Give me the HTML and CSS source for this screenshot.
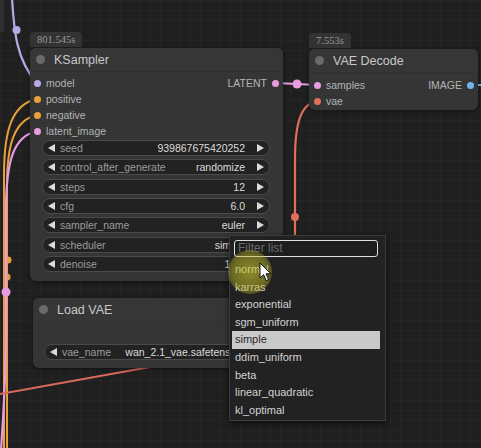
FILE: index.html
```html
<!DOCTYPE html>
<html>
<head>
<meta charset="utf-8">
<link rel="stylesheet" href="styles.css">
</head>
<body>
<div class="canvas">
  <div class="sidepanel"></div>

  <svg class="wires" width="481" height="448" viewBox="0 0 481 448">
    <path d="M12 -2 C14 30, 16 60, 37 83" stroke="#b9a6e6" stroke-width="2.2" fill="none"/>
    <circle cx="16.5" cy="30" r="4" fill="#b9a6e6"/>
    <path d="M37 99 C12 104, 4 130, 4 175 L4 450" stroke="#e8a13a" stroke-width="2" fill="none"/>
    <path d="M37 115 C14 120, 7 145, 7 185 L7 450" stroke="#e8a13a" stroke-width="2" fill="none"/>
    <circle cx="8" cy="260" r="3.5" fill="#e8a13a"/>
    <circle cx="7" cy="277" r="3.5" fill="#e8a13a"/>
    <path d="M37 131 C14 136, 6 160, 6 210 L6 330 C6 380, 3 420, 1 450" stroke="#e89be0" stroke-width="2.2" fill="none"/>
    <circle cx="6" cy="292" r="4.5" fill="#e89be0"/>
    <path d="M0 394 L150 367" stroke="#d8685a" stroke-width="2.2" fill="none"/>
    <path d="M317 101 C300 104, 295 125, 295 160 L295 245" stroke="#e0705c" stroke-width="2.2" fill="none"/>
    <circle cx="295" cy="217" r="4" fill="#e0705c"/>
    <path d="M276 83 L317 85" stroke="#e89be0" stroke-width="2.2" fill="none"/>
    <circle cx="297" cy="84" r="4.5" fill="#e89be0"/>
    <path d="M471 85 L482 85" stroke="#6fb6f0" stroke-width="2" fill="none"/>
  </svg>

  <!-- KSampler -->
  <div class="node ks">
    <div class="badge">801.545s</div>
    <div class="title"><span class="tdot"></span><span class="tname">KSampler</span></div>
    <div class="slots">
      <div class="slot"><span class="dot in purple"></span><span class="slabel">model</span><span class="spacer"></span><span class="olabel">LATENT</span><span class="dot out pink"></span></div>
      <div class="slot"><span class="dot in orange"></span><span class="slabel">positive</span></div>
      <div class="slot"><span class="dot in orange"></span><span class="slabel">negative</span></div>
      <div class="slot"><span class="dot in pink"></span><span class="slabel">latent_image</span></div>
    </div>
    <div class="widgets">
      <div class="widget"><span class="arr l"></span><span class="wlabel">seed</span><span class="wval">939867675420252</span><span class="arr r"></span></div>
      <div class="widget"><span class="arr l"></span><span class="wlabel">control_after_generate</span><span class="wval">randomize</span><span class="arr r"></span></div>
      <div class="widget"><span class="arr l"></span><span class="wlabel">steps</span><span class="wval">12</span><span class="arr r"></span></div>
      <div class="widget"><span class="arr l"></span><span class="wlabel">cfg</span><span class="wval">6.0</span><span class="arr r"></span></div>
      <div class="widget"><span class="arr l"></span><span class="wlabel">sampler_name</span><span class="wval">euler</span><span class="arr r"></span></div>
      <div class="widget"><span class="arr l"></span><span class="wlabel">scheduler</span><span class="wval">simple</span><span class="arr r"></span></div>
      <div class="widget"><span class="arr l"></span><span class="wlabel">denoise</span><span class="wval">1.00</span><span class="arr r"></span></div>
    </div>
  </div>

  <!-- VAE Decode -->
  <div class="node vd">
    <div class="badge">7.553s</div>
    <div class="title"><span class="tdot"></span><span class="tname">VAE Decode</span></div>
    <div class="slots vdslots">
      <div class="slot"><span class="dot in pink"></span><span class="slabel">samples</span><span class="spacer"></span><span class="olabel">IMAGE</span><span class="dot out blue"></span></div>
      <div class="slot"><span class="dot in red"></span><span class="slabel">vae</span></div>
    </div>
  </div>

  <!-- Load VAE -->
  <div class="node lv">
    <div class="title"><span class="tdot"></span><span class="tname">Load VAE</span></div>
    <div class="lvbody">
      <div class="widget lvw"><span class="arr l"></span><span class="wlabel">vae_name</span><span class="wval">wan_2.1_vae.safetensors</span><span class="arr r"></span></div>
    </div>
  </div>

  <!-- Dropdown -->
  <div class="menu">
    <div class="filter">Filter list</div>
    <div class="items">
      <div class="item">normal</div>
      <div class="item">karras</div>
      <div class="item">exponential</div>
      <div class="item">sgm_uniform</div>
      <div class="item sel">simple</div>
      <div class="item">ddim_uniform</div>
      <div class="item">beta</div>
      <div class="item">linear_quadratic</div>
      <div class="item">kl_optimal</div>
    </div>
  </div>

  <div class="glow"></div>
  <svg class="cursor" width="14" height="20" viewBox="0 0 14 20">
    <path d="M1 1 L1 16 L4.6 12.6 L7.2 18.6 L9.6 17.6 L7 11.8 L12 11.8 Z" fill="#ffffff" stroke="#111" stroke-width="1"/>
  </svg>
</div>
</body>
</html>
```

FILE: styles.css
```css
html, body {
  margin: 0;
  padding: 0;
  background: #1e1e1e;
}
.canvas {
  position: relative;
  width: 481px;
  height: 448px;
  overflow: hidden;
  background-color: #1f1f1f;
  background-image:
    linear-gradient(rgba(255,255,255,0.025) 1px, transparent 1px),
    linear-gradient(90deg, rgba(255,255,255,0.025) 1px, transparent 1px);
  background-size: 10px 10px;
  font-family: "Liberation Sans", Arial, sans-serif;
}
.sidepanel {
  position: absolute;
  left: 0;
  top: 0;
  width: 4px;
  height: 33px;
  background: #2f2f2f;
  border-bottom-right-radius: 4px;
}
.wires {
  position: absolute;
  left: 0;
  top: 0;
}
.node {
  position: absolute;
  background: #353535;
  border-radius: 6px;
  box-shadow: 0 1px 4px rgba(0,0,0,0.45);
  display: flex;
  flex-direction: column;
}
.ks { left: 30px; top: 48px; width: 253px; height: 233px; }
.vd { left: 309px; top: 49px; width: 169px; height: 61px; }
.lv { left: 33px; top: 298px; width: 240px; height: 70px; }

.badge {
  position: absolute;
  left: 0;
  top: -16px;
  height: 15px;
  padding: 0 7px 0 7px;
  background: #333333;
  border-radius: 4px 4px 0 0;
  color: #9a9a9a;
  font-family: "Liberation Serif", "Times New Roman", serif;
  font-size: 10.5px;
  line-height: 15px;
}
.title {
  height: 24px;
  display: flex;
  align-items: center;
  padding-left: 6px;
  background: #363636;
  border-radius: 6px 6px 0 0;
  border-bottom: 1px solid #303030;
  box-sizing: border-box;
}
.tdot {
  width: 9px;
  height: 9px;
  border-radius: 50%;
  background: #6a6a6a;
  margin-right: 9px;
}
.tname {
  color: #c9c9c9;
  font-size: 12.5px;
}
.slots {
  padding-top: 3px;
  display: flex;
  flex-direction: column;
}
.vdslots { padding-top: 4px; }
.slot {
  height: 16px;
  display: flex;
  align-items: center;
  padding: 0 4px 0 4px;
}
.dot {
  width: 7px;
  height: 7px;
  border-radius: 50%;
  flex: none;
}
.vd .slot { padding-left: 5px; }
.dot.in { margin-right: 5px; }
.dot.out { margin-left: 5px; }
.purple { background: #b9a6e6; }
.orange { background: #e8a13a; }
.pink { background: #e89be0; }
.red { background: #e0705c; }
.blue { background: #6fb6f0; }
.slabel, .olabel {
  color: #b4b4b4;
  font-size: 10.5px;
}
.spacer { flex: 1; }

.widgets {
  margin: 1px 13px 0 12px;
  display: flex;
  flex-direction: column;
  gap: 3.33px;
}
.widget {
  height: 16px;
  box-sizing: border-box;
  border: 1px solid #4a4a4a;
  border-radius: 8px;
  background: #222222;
  display: flex;
  align-items: center;
  padding: 0 5px 0 5px;
  font-size: 10.5px;
  white-space: nowrap;
  overflow: hidden;
}
.arr {
  width: 0;
  height: 0;
  border-top: 4px solid transparent;
  border-bottom: 4px solid transparent;
  flex: none;
}
.arr.l { border-right: 7px solid #dcdcdc; margin-right: 5px; }
.arr.r { border-left: 7px solid #dcdcdc; margin-left: 12px; }
.wlabel {
  color: #9c9c9c;
  flex: 1;
}
.wval {
  color: #dcdcdc;
}
.lvbody {
  padding: 22px 0 0 11px;
}
.lvw { width: 226px; }

.menu {
  position: absolute;
  left: 229px;
  top: 235px;
  width: 157px;
  height: 186px;
  box-sizing: border-box;
  background: #222222;
  border: 1px solid #3b3b3b;
  box-shadow: 0 2px 6px rgba(0,0,0,0.6);
  padding: 4px 4px 0 4px;
  display: flex;
  flex-direction: column;
}
.filter {
  height: 17px;
  box-sizing: border-box;
  margin: 0 3px 0 0;
  border: 1.5px solid #e0e0e0;
  border-radius: 3px;
  background: #1e1e1e;
  color: #6a6a6a;
  font-size: 12px;
  line-height: 14px;
  padding-left: 3px;
}
.items {
  margin-top: 4px;
  display: flex;
  flex-direction: column;
}
.item {
  height: 17.6px;
  line-height: 17.6px;
  color: #d2d2d2;
  font-size: 11px;
  margin: 0 1px 0 -2px;
  padding-left: 3px;
}
.item.sel {
  background: #c9c9c9;
  color: #2a2a2a;
}
.glow {
  position: absolute;
  left: 228px;
  top: 250px;
  width: 44px;
  height: 44px;
  border-radius: 50%;
  background: radial-gradient(circle, rgba(205,200,40,0.62) 0%, rgba(190,185,40,0.48) 55%, rgba(180,180,40,0) 100%);
}
.cursor {
  position: absolute;
  left: 259px;
  top: 262px;
}
```
